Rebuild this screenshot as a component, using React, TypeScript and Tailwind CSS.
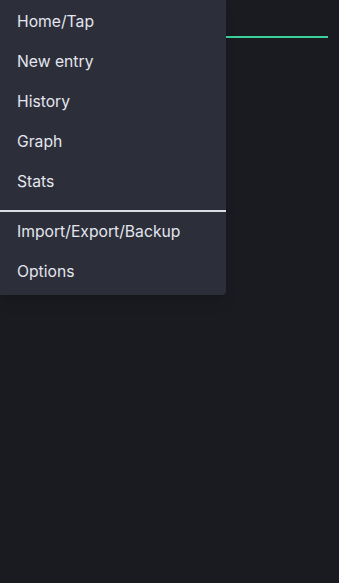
import React from 'react';

const mainItems = ['Home/Tap', 'New entry', 'History', 'Graph', 'Stats'];
const extraItems = ['Import/Export/Backup', 'Options'];

const MenuItem = ({ label }: { label: string }) => (
  <a href="#" className="flex h-10 items-center pl-[17px] pr-4 text-[15.7px] text-[#e4e6ee]">
    {label}
  </a>
);

export default function App() {
  return (
    <div
      className="relative h-[583px] w-full overflow-hidden bg-[#1a1b20]"
      style={{ fontFamily: 'Inter, "Noto Sans", sans-serif' }}
    >
      {/* Page content behind the drawer */}
      <div className="px-[10px] pr-[11px] pt-[36px]">
        <div className="h-[2px] w-full bg-[#3ccf9c]" />
      </div>

      {/* Drawer menu */}
      <nav className="absolute left-0 top-0 w-[226px] rounded-br-[4px] bg-[#2c2e3a] pt-[2px] pb-[3px] shadow-lg">
        {mainItems.map((item) => (
          <MenuItem key={item} label={item} />
        ))}
        <div className="mt-2 h-[2px] bg-[#dcdde2]" />
        {extraItems.map((item) => (
          <MenuItem key={item} label={item} />
        ))}
      </nav>
    </div>
  );
}
